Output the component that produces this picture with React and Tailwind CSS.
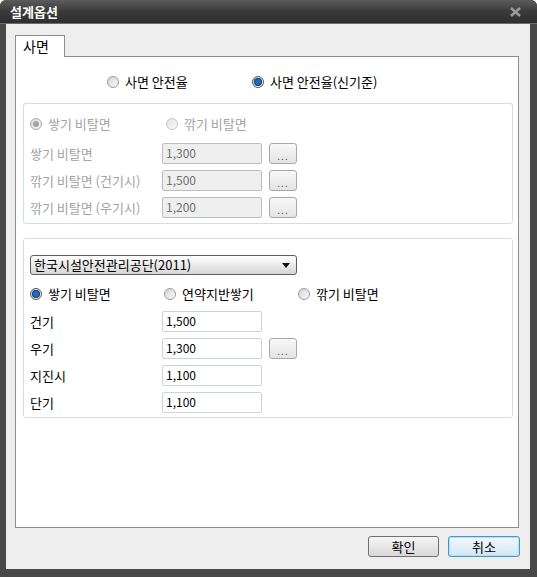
import React from "react";

const font = "font-['Noto_Sans_CJK_KR','Noto_Sans_CJK_JP',sans-serif]";

function Radio({ checked, disabled, label, className = "" }) {
  const ring = checked
    ? disabled
      ? "border-[#a9a9a9] bg-linear-to-br from-[#dcdcdc] to-[#f7f7f7]"
      : "border-[#5a5a5a] bg-linear-to-br from-[#cfcfcf] to-[#fbfbfb]"
    : disabled
    ? "border-[#c4c4c4] bg-linear-to-br from-[#e2e2e2] to-[#fafafa]"
    : "border-[#9a9a9a] bg-linear-to-br from-[#d4d4d4] to-[#fbfbfb]";
  return (
    <div className={`flex items-center gap-[6px] h-[16px] ${className}`}>
      <span className={`w-[12px] h-[12px] shrink-0 rounded-full border flex items-center justify-center ${ring}`}>
        {checked && (
          <span
            className={`w-[6px] h-[6px] rounded-full ${
              disabled ? "bg-[#a3a3a3]" : "bg-[#1d6cc4] ring-1 ring-[#0d3a70]"
            }`}
          />
        )}
      </span>
      <span className={`leading-[16px] whitespace-nowrap ${disabled ? "text-[#a3a3a3]" : "text-black"}`}>{label}</span>
    </div>
  );
}

function MoreButton() {
  return (
    <button className="ml-[7px] w-[28px] h-[21px] rounded-[3px] border border-[#a9a9a9] bg-linear-to-b from-[#f8f8f8] to-[#e4e4e4] text-[10px] leading-[10px] text-[#555] tracking-[1px] pt-[4px]">
      ...
    </button>
  );
}

function Field({ label, value, disabled, more }) {
  return (
    <div className="flex items-center h-[21px]">
      <span className={`w-[132px] leading-[16px] whitespace-nowrap ${disabled ? "text-[#a3a3a3]" : "text-black"}`}>{label}</span>
      <div
        className={`w-[100px] h-[21px] rounded-[2px] border px-[3px] text-[12px] leading-[17px] ${
          disabled ? "border-[#bdbdbd] bg-[#efefef] text-[#707070]" : "border-[#cad3dc] bg-white text-black"
        }`}
      >
        {value}
      </div>
      {more && <MoreButton />}
    </div>
  );
}

export default function App() {
  return (
    <div className={`w-[537px] h-[577px] bg-white text-[13px] ${font}`}>
      <div className="w-full h-full bg-[#494949] rounded-t-[6px] flex flex-col overflow-hidden">
        <div className="h-[24px] shrink-0 bg-linear-to-b from-[#5c5c5c] via-[#3a3a3a] to-[#2f2f2f] border-b border-[#6b6b6b] flex items-center justify-between pl-[10px] pr-[16px]">
          <span className="text-white font-bold text-[13px] leading-[16px]">설계옵션</span>
          <svg width="11" height="10" viewBox="0 0 11 10">
            <path d="M1 1 L10 9 M10 1 L1 9" stroke="#9b9b9b" strokeWidth="2.6" />
          </svg>
        </div>

        <div className="flex-1 ml-[6px] mr-[7px] mb-[8px] bg-[#eeeeee] flex flex-col pt-[11px] pb-[12px]">
          <div className="ml-[9px] w-[50px] h-[22px] -mb-px relative z-10 bg-white border-t border-l border-r border-[#8e8e8e] pl-[7px] text-[14px] leading-[20px] text-black">
            사면
          </div>

          <div className="flex-1 ml-[9px] mr-[11px] border border-[#8e8e8e] bg-white flex flex-col">
            <div className="flex mt-[17px] ml-[91px]">
              <Radio className="w-[145px]" label="사면 안전율" />
              <Radio checked label="사면 안전율(신기준)" />
            </div>

            <div className="mt-[13px] ml-[7px] mr-[5px] h-[121px] rounded-[3px] border border-[#d3dde4] pl-[6px] pt-[12px] flex flex-col">
              <div className="flex">
                <Radio className="w-[136px]" checked disabled label="쌓기 비탈면" />
                <Radio disabled label="깎기 비탈면" />
              </div>
              <div className="mt-[11px] flex flex-col gap-[6px]">
                <Field disabled more label="쌓기 비탈면" value="1,300" />
                <Field disabled more label="깎기 비탈면 (건기시)" value="1,500" />
                <Field disabled more label="깎기 비탈면 (우기시)" value="1,200" />
              </div>
            </div>

            <div className="mt-[14px] ml-[7px] mr-[5px] h-[180px] rounded-[3px] border border-[#d3dde4] pl-[6px] pt-[16px] flex flex-col">
              <div className="w-[267px] h-[20px] rounded-[3px] border border-[#5e5e5e] bg-linear-to-b from-[#ffffff] to-[#d6d6d6] flex items-center justify-between pl-[3px] pr-[6px]">
                <span className="leading-[16px] text-black">한국시설안전관리공단(2011)</span>
                <svg width="8" height="5" viewBox="0 0 8 5">
                  <path d="M0 0 H8 L4 5 Z" fill="#111" />
                </svg>
              </div>
              <div className="flex mt-[11px]">
                <Radio className="w-[134px]" checked label="쌓기 비탈면" />
                <Radio className="w-[134px]" label="연약지반쌓기" />
                <Radio label="깎기 비탈면" />
              </div>
              <div className="mt-[9px] flex flex-col gap-[6px]">
                <Field label="건기" value="1,500" />
                <Field more label="우기" value="1,300" />
                <Field label="지진시" value="1,100" />
                <Field label="단기" value="1,100" />
              </div>
            </div>
          </div>

          <div className="mt-[8px] h-[21px] flex justify-end gap-[9px] pr-[10px]">
            <button className="w-[71px] h-[21px] rounded-[3px] border border-[#707070] bg-linear-to-b from-[#f6f6f6] to-[#d8d8d8] text-[13px] leading-[18px] text-black">
              확인
            </button>
            <button className="w-[72px] h-[21px] rounded-[3px] border border-[#3c9ad6] shadow-[inset_0_0_0_1px_#b3e0f7] bg-linear-to-b from-[#f2f8fc] to-[#d4e6f2] text-[13px] leading-[18px] text-black">
              취소
            </button>
          </div>
        </div>
      </div>
    </div>
  );
}
